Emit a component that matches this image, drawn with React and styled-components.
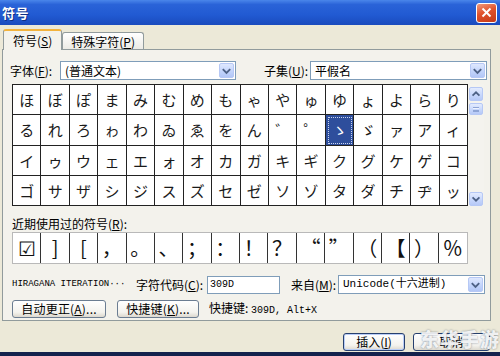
import React from "react";
import styled, { createGlobalStyle } from "styled-components";

const GlobalStyle = createGlobalStyle`
  html, body {
    margin: 0;
    padding: 0;
  }
  body {
    font-family: "Noto Sans CJK SC", "Noto Sans", sans-serif;
    font-size: 12px;
    color: #000;
  }
  * {
    box-sizing: border-box;
  }
`;

const rows = [
  "ほぼぽまみむめもゃやゅゆょよらり",
  "るれろゎわゐゑをん゛゜ゝゞァアィ",
  "イゥウェエォオカガキギクグケゲコ",
  "ゴサザシジスズセゼソゾタダチヂッ",
];

const recent = ["☑", "]", "[", "，", "。", "、", "；", "：", "！", "？", "“", "”", "（", "【", "）", "％"];

function Chevron({ dir = "down" }) {
  const points = dir === "down" ? "3,5 7,9 11,5" : "3,9 7,5 11,9";
  return (
    <svg width="14" height="14" viewBox="0 0 14 14">
      <polyline points={points} fill="none" stroke="#4d6185" strokeWidth="2" />
    </svg>
  );
}

export default function App() {
  return (
    <Window>
      <GlobalStyle />
      <TitleBar>
        <Title>符号</Title>
        <CloseButton>
          <svg width="11" height="11" viewBox="0 0 11 11">
            <line x1="1.5" y1="1.5" x2="9.5" y2="9.5" stroke="#fff" strokeWidth="2" />
            <line x1="9.5" y1="1.5" x2="1.5" y2="9.5" stroke="#fff" strokeWidth="2" />
          </svg>
        </CloseButton>
      </TitleBar>

      <Body>
        <TabRow>
          <Tab $active>
            符号(<u>S</u>)
          </Tab>
          <Tab>
            特殊字符(<u>P</u>)
          </Tab>
        </TabRow>

        <Panel>
          <FieldRow>
            <Label $width={51}>
              字体(<u>F</u>):
            </Label>
            <Combo $width={176}>
              <ComboText>(普通文本)</ComboText>
              <DropButton>
                <Chevron />
              </DropButton>
            </Combo>
            <Label $width={47} $gap={27}>
              子集(<u>U</u>):
            </Label>
            <Combo $width={177}>
              <ComboText>平假名</ComboText>
              <DropButton>
                <Chevron />
              </DropButton>
            </Combo>
          </FieldRow>

          <GridArea>
            <CharGrid>
              {rows.map((row, r) =>
                Array.from(row).map((ch, c) => (
                  <Cell key={r + "-" + c} $selected={r === 1 && c === 11}>
                    {ch}
                  </Cell>
                ))
              )}
            </CharGrid>
            <ScrollBar>
              <ScrollButton>
                <Chevron dir="up" />
              </ScrollButton>
              <ScrollThumb>
                <Grip />
              </ScrollThumb>
              <ScrollTrack />
              <ScrollButton>
                <Chevron />
              </ScrollButton>
            </ScrollBar>
          </GridArea>

          <RecentLabel>
            近期使用过的符号(<u>R</u>):
          </RecentLabel>
          <RecentGrid>
            {recent.map((ch, i) => (
              <RecentCell key={i}>{ch}</RecentCell>
            ))}
          </RecentGrid>

          <FieldRow $top={11}>
            <CharName>HIRAGANA ITERATION···</CharName>
            <Label $width={72}>
              字符代码(<u>C</u>):
            </Label>
            <TextInput>309D</TextInput>
            <Label $width={48} $gap={10}>
              来自(<u>M</u>):
            </Label>
            <Combo $width={147}>
              <ComboText $mono>Unicode(十六进制)</ComboText>
              <DropButton>
                <Chevron />
              </DropButton>
            </Combo>
          </FieldRow>

          <FieldRow $top={5}>
            <Button $width={94} $gap={3}>
              自动更正(<u>A</u>)...
            </Button>
            <Button $width={82} $gap={11}>
              快捷键(<u>K</u>)...
            </Button>
            <Shortcut>
              快捷键: <Mono>309D, Alt+X</Mono>
            </Shortcut>
          </FieldRow>
        </Panel>

        <Footer>
          <DialogButton $width={62} $default>
            插入(<u>I</u>)
          </DialogButton>
          <DialogButton $width={77}>取消</DialogButton>
        </Footer>
      </Body>

      <Watermark>东华手游</Watermark>
    </Window>
  );
}

const Window = styled.div`
  position: relative;
  width: 500px;
  height: 356px;
  display: flex;
  flex-direction: column;
  background: #ece9d8;
  border-bottom: 4px solid #14224d;
  overflow: hidden;
`;

const TitleBar = styled.div`
  height: 25px;
  flex: none;
  display: flex;
  align-items: center;
  justify-content: space-between;
  padding: 0 3px 0 2px;
  background: linear-gradient(180deg, #4a86ea 0%, #2a63d8 18%, #215ad2 60%, #1a4bbd 100%);
`;

const Title = styled.div`
  color: #fff;
  font-size: 13px;
  font-weight: 700;
  line-height: 1;
  letter-spacing: 0.5px;
  text-shadow: 1px 1px 0 #0f2f86;
`;

const CloseButton = styled.div`
  width: 21px;
  height: 20px;
  display: flex;
  align-items: center;
  justify-content: center;
  border: 1px solid #fff;
  border-radius: 3px;
  background: linear-gradient(160deg, #f09a7e 0%, #e0522c 45%, #c53a17 100%);
`;

const Body = styled.div`
  flex: 1;
  display: flex;
  flex-direction: column;
  padding: 3px 9px 0 2px;
`;

const TabRow = styled.div`
  display: flex;
  align-items: flex-end;
  height: 21px;
  padding-left: 1px;
`;

const Tab = styled.div`
  position: relative;
  z-index: ${(p) => (p.$active ? 1 : 0)};
  height: ${(p) => (p.$active ? "21px" : "17px")};
  margin-bottom: ${(p) => (p.$active ? "-1px" : "0")};
  padding: 0 ${(p) => (p.$active ? "9px" : "8px")};
  display: flex;
  align-items: center;
  line-height: 1;
  border: 1px solid #919b9c;
  border-bottom: none;
  border-top: ${(p) => (p.$active ? "2px solid #f3b33d" : "1px solid #919b9c")};
  border-radius: 3px 3px 0 0;
  background: ${(p) => (p.$active ? "#f3f2ec" : "linear-gradient(180deg, #ffffff, #ecebe5)")};
  padding-top: ${(p) => (p.$active ? "0" : "1px")};
`;

const Panel = styled.div`
  height: 272px;
  display: flex;
  flex-direction: column;
  padding: 11px 0 0 6px;
  border: 1px solid #919b9c;
  background: #f3f2ec;
`;

const FieldRow = styled.div`
  display: flex;
  align-items: center;
  height: 19px;
  margin-top: ${(p) => (p.$top ? p.$top + "px" : "0")};
`;

const Label = styled.div`
  width: ${(p) => p.$width}px;
  margin-left: ${(p) => (p.$gap ? p.$gap + "px" : "0")};
  flex: none;
  white-space: nowrap;
  line-height: 1;
  padding-left: 1px;
`;

const Combo = styled.div`
  width: ${(p) => p.$width}px;
  height: 19px;
  flex: none;
  display: flex;
  align-items: center;
  justify-content: space-between;
  padding: 1px;
  background: #fff;
  border: 1px solid #7f9db9;
`;

const ComboText = styled.span`
  padding-left: 3px;
  line-height: 1;
  white-space: nowrap;
  font-family: ${(p) => (p.$mono ? '"Liberation Mono", "Noto Sans CJK SC", monospace' : "inherit")};
  font-size: ${(p) => (p.$mono ? "11px" : "12px")};
`;

const DropButton = styled.div`
  width: 15px;
  height: 15px;
  display: flex;
  align-items: center;
  justify-content: center;
  border: 1px solid #b6c8f5;
  border-radius: 2px;
  background: linear-gradient(180deg, #dfe8fe 0%, #c1d3fb 60%, #b2c6f6 100%);
`;

const GridArea = styled.div`
  display: flex;
  margin: 4px 0 0 3px;
  height: 122px;
`;

const CharGrid = styled.div`
  width: 456px;
  height: 122px;
  display: grid;
  grid-template-columns: repeat(16, 1fr);
  grid-template-rows: repeat(4, 1fr);
  border-top: 1px solid #222;
  border-left: 1px solid #222;
  background: #fff;
`;

const Cell = styled.div`
  display: flex;
  align-items: center;
  justify-content: center;
  border-right: 1px solid #222;
  border-bottom: 1px solid #222;
  font-family: "Noto Sans CJK JP", sans-serif;
  font-size: 15px;
  line-height: 1;
  color: ${(p) => (p.$selected ? "#fff" : "#1a1a1a")};
  background: ${(p) => (p.$selected ? "#2e4e9c" : "#fff")};
  outline: ${(p) => (p.$selected ? "1px dotted #c9d4ee" : "none")};
  outline-offset: -3px;
`;

const ScrollBar = styled.div`
  width: 16px;
  display: flex;
  flex-direction: column;
  padding: 3px 1px 0 1px;
  gap: 2px;
  background: #f4f3ee;
`;

const ScrollButton = styled.div`
  width: 14px;
  height: 14px;
  flex: none;
  display: flex;
  align-items: center;
  justify-content: center;
  border: 1px solid #b6c8f5;
  border-radius: 2px;
  background: linear-gradient(180deg, #e3ebfe 0%, #c6d6fc 60%, #b6c9f7 100%);
`;

const ScrollThumb = styled(ScrollButton)`
  height: 12px;
`;

const Grip = styled.div`
  width: 6px;
  height: 5px;
  border-top: 1px solid #8ea4d6;
  border-bottom: 1px solid #8ea4d6;
  box-shadow: inset 0 1px 0 #eef3ff, inset 0 -1px 0 #8ea4d6;
`;

const ScrollTrack = styled.div`
  flex: 1;
`;

const RecentLabel = styled.div`
  margin-top: 11px;
  height: 13px;
  line-height: 13px;
  padding-left: 3px;
`;

const RecentGrid = styled.div`
  width: 456px;
  height: 32px;
  margin: 2px 0 0 3px;
  display: grid;
  grid-template-columns: repeat(16, 1fr);
  border: 1px solid #b9b9b9;
  background: #fff;
`;

const RecentCell = styled.div`
  display: flex;
  align-items: center;
  justify-content: center;
  font-family: "Noto Sans CJK SC", sans-serif;
  font-size: 20px;
  line-height: 1;
  color: #111;
  border-right: 1px solid #333;

  &:last-child {
    border-right: none;
  }
`;

const CharName = styled.div`
  width: 126px;
  padding-left: 3px;
  font-family: "Liberation Mono", monospace;
  font-size: 9px;
  white-space: nowrap;
  line-height: 1;
`;

const TextInput = styled.div`
  width: 73px;
  height: 18px;
  display: flex;
  align-items: center;
  padding-left: 2px;
  background: #fff;
  border: 1px solid #7f9db9;
  font-family: "Liberation Mono", monospace;
  font-size: 10px;
`;

const Button = styled.div`
  width: ${(p) => p.$width}px;
  height: 18px;
  margin-left: ${(p) => p.$gap}px;
  display: flex;
  align-items: center;
  justify-content: center;
  line-height: 1;
  white-space: nowrap;
  border: 1px solid #6b7d92;
  border-radius: 3px;
  background: linear-gradient(180deg, #ffffff 0%, #f4f3ee 70%, #dcd8ce 100%);
  letter-spacing: 0.2px;
`;

const Shortcut = styled.div`
  margin-left: 10px;
  white-space: nowrap;
  line-height: 1;
`;

const Mono = styled.span`
  font-family: "Liberation Mono", monospace;
  font-size: 10px;
`;

const Footer = styled.div`
  display: flex;
  justify-content: flex-end;
  gap: 8px;
  padding: 12px 1px 0 0;
`;

const DialogButton = styled.div`
  width: ${(p) => p.$width}px;
  height: 18px;
  display: flex;
  align-items: center;
  justify-content: center;
  line-height: 1;
  border: 1px solid #27406e;
  border-radius: 3px;
  background: linear-gradient(180deg, #ffffff 0%, #f4f3ee 70%, #dcd8ce 100%);
  box-shadow: ${(p) => (p.$default ? "inset 0 0 0 1px #b9cdf6" : "none")};
`;

const Watermark = styled.div`
  position: absolute;
  right: 0;
  bottom: 4px;
  font-family: "Noto Sans CJK SC", sans-serif;
  font-size: 19px;
  font-weight: 900;
  letter-spacing: 1px;
  line-height: 1;
  color: rgba(255, 255, 255, 0.88);
  text-shadow: 0 0 2px rgba(40, 60, 90, 0.6);
`;
